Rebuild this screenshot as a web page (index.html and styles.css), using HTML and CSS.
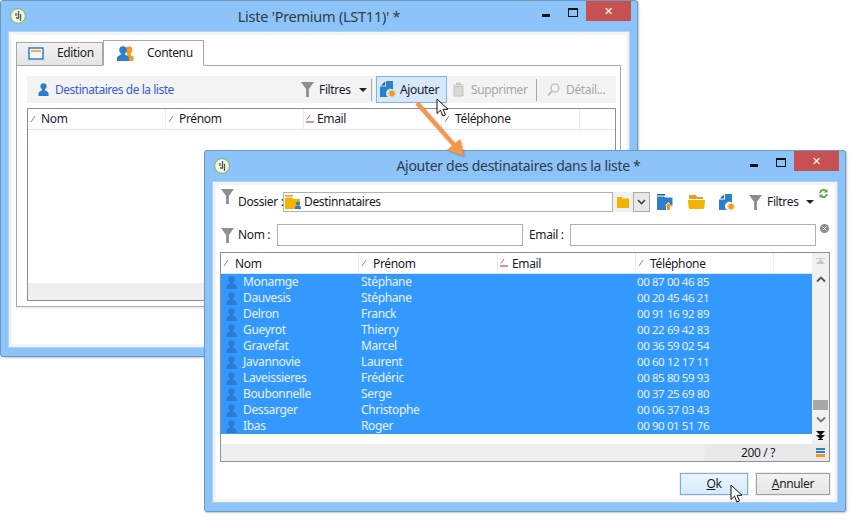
FILE: index.html
```html
<!DOCTYPE html>
<html lang="fr">
<head>
<meta charset="utf-8">
<title>Liste Premium</title>
<link rel="stylesheet" href="styles.css">
</head>
<body>
<svg class="defs" width="0" height="0">
  <symbol id="person" viewBox="0 0 12 16"><circle cx="6" cy="4.5" r="3.4"/><path d="M4.5 7h3l.3 2.2c2 .7 3.7 1.6 3.7 3.3V15H.5v-2.500c0-1.700 1.700-2.600 3.700-3.300z"/></symbol>
  <symbol id="funnel" viewBox="0 0 14 16"><path d="M0 0h14L8.500 7.500V16h-3V7.500z"/></symbol>
  <symbol id="sort" viewBox="0 0 8 8"><path d="M1 7 5 1" fill="none" stroke="#888" stroke-width="1"/></symbol>
  <symbol id="sortred" viewBox="0 0 8 8"><path d="M1 4.500 4 0" fill="none" stroke="#888" stroke-width="1"/><path d="M0 7h8" stroke="#d01818" stroke-width="1"/></symbol>
  <symbol id="add" viewBox="0 0 16 17"><path d="M1 4.500 5 .5v4z" fill="#1c5f9f"/><path d="M6 0h7v8.500a4.500 4.500 0 0 0-5 7.500H0V5.500h6z" fill="#2a80cf"/><circle cx="12" cy="12.500" r="2.700" fill="#f39a1e"/><path d="M12 8.500v8M8 12.500h8M9.200 9.700l5.600 5.600M14.800 9.700l-5.600 5.600" stroke="#f39a1e" stroke-width=".8"/></symbol>
  <symbol id="logo" viewBox="0 0 16 16"><circle cx="8" cy="8" r="7.300" fill="#f4f4ee" stroke="#8ab83c"/><path d="M8.500 3v7H6M6 5v3M10.500 6v7" fill="none" stroke="#555" stroke-width="1.300"/></symbol>
  <symbol id="cursor" viewBox="0 0 13 20"><path d="M1 1v14.500l3.500-3.300 2.400 5.800 2.600-1.100-2.400-5.600H12z" fill="#fff" stroke="#111"/></symbol>
</svg>

<section class="window window-back">
  <header class="titlebar">
    <svg class="logo"><use href="#logo"/></svg>
    <h1 class="title title-back">Liste 'Premium (LST11)' *</h1>
    <div class="winbtns">
      <span class="win-min"></span><span class="win-max"></span><span class="win-close">✕</span>
    </div>
  </header>
  <div class="client client-back">
    <div class="tabs">
      <div class="tab tab-edition">
        <svg class="tab-icon" viewBox="0 0 16 13" width="16" height="13"><rect x="1" y="1" width="14" height="11" fill="#f7f7f7" stroke="#2a80cf" stroke-width="1.500"/><rect x="3" y="3.200" width="10" height="1.600" fill="#f39a1e"/></svg>
        <span>Edition</span>
      </div>
      <div class="tab tab-contenu">
        <svg viewBox="0 0 17 15" width="17" height="15"><circle cx="12" cy="4" r="3.400" fill="#f39a1e"/><path d="M10 7h4l-.5 2 3 1.500V15h-6z" fill="#f39a1e"/><circle cx="6" cy="4" r="3.800" fill="#2a80cf"/><path d="M4 7h4l.5 2c2 .5 3.500 1.500 3.500 3v3H0v-3c0-1.500 1.500-2.500 3.500-3z" fill="#2a80cf"/></svg>
        <span>Contenu</span>
      </div>
    </div>
    <div class="panel">
      <div class="toolbar">
        <svg class="tb-person"><use href="#person"/></svg>
        <span class="tb-title">Destinataires de la liste</span>
        <span class="tb-item tb-filter"><svg class="ico-funnel"><use href="#funnel"/></svg>Filtres<i class="caret"></i></span>
        <i class="tb-sep"></i>
        <span class="tb-item tb-add"><svg class="ico-add"><use href="#add"/></svg>Ajouter</span>
        <span class="tb-item tb-off">
          <svg viewBox="0 0 13 15" width="13" height="15"><path d="M1 3h11M4.500 3V1h4v2M2 4.500h9V14H2z" fill="#d8d8d8" stroke="#c4c4c4"/></svg>Supprimer</span>
        <i class="tb-sep tb-sep-2"></i>
        <span class="tb-item tb-off tb-detail">
          <svg viewBox="0 0 13 14" width="13" height="14"><circle cx="8" cy="5" r="4" fill="none" stroke="#c4c4c4" stroke-width="1.500"/><path d="M5 8 1 12.500" stroke="#c4c4c4" stroke-width="2"/></svg>Détail...</span>
      </div>
      <div class="grid grid-back">
        <div class="thead thead-back">
          <div class="th"><svg class="s"><use href="#sort"/></svg>Nom</div>
          <div class="th"><svg class="s"><use href="#sort"/></svg>Prénom</div>
          <div class="th"><svg class="s"><use href="#sortred"/></svg>Email</div>
          <div class="th"><svg class="s"><use href="#sort"/></svg>Téléphone</div>
          <div class="th"></div>
        </div>
        <div class="grid-empty"></div>
        <div class="grid-foot"></div>
      </div>
    </div>
  </div>
</section>

<section class="window window-front">
  <header class="titlebar">
    <svg class="logo"><use href="#logo"/></svg>
    <h1 class="title title-front">Ajouter des destinataires dans la liste *</h1>
    <div class="winbtns">
      <span class="win-min"></span><span class="win-max"></span><span class="win-close">✕</span>
    </div>
  </header>
  <div class="client client-front">
    <div class="row-folder">
      <svg class="ico-funnel top"><use href="#funnel"/></svg>
      <label class="lab">Dossier :</label>
      <div class="folder-input">
        <svg viewBox="0 0 17 14" width="17" height="14"><path d="M0 0h8v1.500H0z" fill="#f39a1e"/><path d="M0 2.500h7L8.500 4H15v10H0z" fill="#f0b400"/><circle cx="13" cy="8.500" r="2" fill="#2a80cf"/><path d="M10 14v-1.500c0-1 1.500-1.700 3-1.700s3 .7 3 1.700V14z" fill="#2a80cf"/></svg>
        <span>Destinnataires</span>
      </div>
      <span class="folder-btn"><svg viewBox="0 0 12 11" width="12" height="11"><path d="M0 0h5l1 1.500h6V11H0z" fill="#f0b400"/></svg></span>
      <span class="drop-btn"><svg viewBox="0 0 9 6" width="9" height="6"><path d="M1 1l3.500 3.500L8 1" fill="none" stroke="#444" stroke-width="1.600"/></svg></span>
      <svg class="tool tool-up" viewBox="0 0 16 16" width="16" height="16"><path d="M0 0h8v1.500H0z" fill="#1f5f9e"/><path d="M0 2.500h7l1 1h7.500v8H14L11.500 8 8 11.500h1V16H0z" fill="#2a80cf"/><path d="M11.500 9l3.500 3.500H13V16h-3v-3.500H8z" fill="#f39a1e"/></svg>
      <svg class="tool tool-folder" viewBox="0 0 17 14" width="17" height="14"><path d="M1 0h7l1 2h6v2H1z" fill="#f39a1e"/><path d="M0 5h17l-.5 7-1 2H1.500l-1-2z" fill="#f0b400"/></svg>
      <svg class="tool tool-add"><use href="#add"/></svg>
      <svg class="ico-funnel tool-funnel"><use href="#funnel"/></svg>
      <span class="lab filt">Filtres</span>
      <i class="caret caret-front"></i>
      <svg class="refresh" viewBox="0 0 9 9" width="9" height="9"><path d="M1 4a3.500 3.500 0 0 1 6-2M8 5a3.500 3.500 0 0 1-6 2" fill="none" stroke="#4eaa3a" stroke-width="1.800"/><path d="M8.500 0v3.500H5zM.5 9V5.500H4z" fill="#4eaa3a"/></svg>
    </div>
    <div class="row-search">
      <svg class="ico-funnel"><use href="#funnel"/></svg>
      <label class="lab">Nom :</label>
      <div class="input input-nom"></div>
      <label class="lab lab-email">Email :</label>
      <div class="input input-email"></div>
      <svg class="clear" viewBox="0 0 9 9" width="9" height="9"><circle cx="4.500" cy="4.500" r="4.500" fill="#8e8e8e"/><path d="M2.700 2.700l3.600 3.600M6.300 2.700 2.700 6.300" stroke="#fff"/></svg>
    </div>
    <div class="grid grid-front">
      <div class="grid-main">
        <div class="thead thead-front">
          <div class="th"><svg class="s"><use href="#sort"/></svg>Nom</div>
          <div class="th"><svg class="s"><use href="#sort"/></svg>Prénom</div>
          <div class="th"><svg class="s"><use href="#sortred"/></svg>Email</div>
          <div class="th"><svg class="s"><use href="#sort"/></svg>Téléphone</div>
          <div class="th"></div>
        </div>
        <div class="rows">
          <div class="tr"><svg><use href="#person"/></svg><span>Monamge</span><span>Stéphane</span><span></span><span class="tel">00 87 00 46 85</span></div>
          <div class="tr"><svg><use href="#person"/></svg><span>Dauvesis</span><span>Stéphane</span><span></span><span class="tel">00 20 45 46 21</span></div>
          <div class="tr"><svg><use href="#person"/></svg><span>Delron</span><span>Franck</span><span></span><span class="tel">00 91 16 92 89</span></div>
          <div class="tr"><svg><use href="#person"/></svg><span>Gueyrot</span><span>Thierry</span><span></span><span class="tel">00 22 69 42 83</span></div>
          <div class="tr"><svg><use href="#person"/></svg><span>Gravefat</span><span>Marcel</span><span></span><span class="tel">00 36 59 02 54</span></div>
          <div class="tr"><svg><use href="#person"/></svg><span>Javannovie</span><span>Laurent</span><span></span><span class="tel">00 60 12 17 11</span></div>
          <div class="tr"><svg><use href="#person"/></svg><span>Laveissieres</span><span>Frédéric</span><span></span><span class="tel">00 85 80 59 93</span></div>
          <div class="tr"><svg><use href="#person"/></svg><span>Boubonnelle</span><span>Serge</span><span></span><span class="tel">00 37 25 69 80</span></div>
          <div class="tr"><svg><use href="#person"/></svg><span>Dessarger</span><span>Christophe</span><span></span><span class="tel">00 06 37 03 43</span></div>
          <div class="tr"><svg><use href="#person"/></svg><span>Ibas</span><span>Roger</span><span></span><span class="tel">00 90 01 51 76</span></div>
        </div>
      </div>
      <div class="scroll">
        <svg viewBox="0 0 9 8" width="9" height="8"><path d="M0 1h9v1H0zM4.500 2 9 7H0z" fill="#c8c8c8"/></svg>
        <svg class="sc-up" viewBox="0 0 10 7" width="10" height="7"><path d="M1 5.500 5 1.500l4 4" fill="none" stroke="#555" stroke-width="1.800"/></svg>
        <span class="sc-spacer"></span>
        <i class="sc-thumb"></i>
        <svg class="sc-down" viewBox="0 0 10 7" width="10" height="7"><path d="M1 1.500l4 4 4-4" fill="none" stroke="#777" stroke-width="1.800"/></svg>
        <svg class="sc-end" viewBox="0 0 9 9" width="9" height="9"><path d="M0 0h9L4.500 4.500zM0 4h9L4.500 8.500zM2 8h5v1H2z" fill="#111"/></svg>
      </div>
      <div class="count-bar">
        <span class="count">200 / ?</span>
        <span class="menu"><i></i><i></i><i></i></span>
      </div>
    </div>
    <div class="actions">
      <button class="btn btn-ok" type="button"><u>O</u>k</button>
      <button class="btn" type="button"><u>A</u>nnuler</button>
    </div>
  </div>
</section>

<svg class="arrow" viewBox="0 0 60 60" width="60" height="60"><path d="M2 1 L40 44" stroke="#f79646" stroke-width="4" fill="none"/><path d="M49 54 L32 48 L45 37z" fill="#f79646"/></svg>
<svg class="cursor cursor-1"><use href="#cursor"/></svg>
<svg class="cursor cursor-2"><use href="#cursor"/></svg>
</body>
</html>
```

FILE: styles.css
```css
* { box-sizing: border-box; }
html, body { margin: 0; height: 100%; }
body {
  position: relative;
  width: 861px;
  height: 528px;
  overflow: hidden;
  background: #fff;
  font: 12px/16px "Noto Sans", "Open Sans", sans-serif;
  letter-spacing: -.35px;
  color: #1a1a2a;
}
.defs { position: absolute; }

/* Windows on a desktop */
.window {
  position: absolute;
  display: flex;
  flex-direction: column;
  background: #8cc4f9;
  border: 1px solid #6f97c0;
  border-radius: 3px;
  box-shadow: 1px 1px 2px rgba(90, 90, 90, .35);
  padding: 0 7px 8px;
}
.window-back { left: 0; top: 0; width: 638px; height: 357px; }
.window-front { left: 204px; top: 150px; width: 642px; height: 362px; }

.titlebar { display: flex; align-items: flex-start; height: 30px; flex: none; position: relative; }
.logo { width: 16px; height: 16px; margin: 7px 0 0 2px; }
.title {
  flex: 1;
  margin: 4px 0 0;
  font-size: 14.500px;
  line-height: 22px;
  font-weight: 400;
  letter-spacing: -.25px;
  color: #333a45;
  text-align: center;
}
.title-back { padding-right: 18px; }
.title-front { font-size: 14px; letter-spacing: -.3px; padding-right: 31px; }
.winbtns { display: flex; align-items: flex-start; position: absolute; right: -1px; top: 0; }
.win-min { width: 8px; height: 3px; background: #111; margin: 13px 18px 0 0; }
.win-max { width: 10px; height: 9px; border: 1px solid #111; border-top-width: 2px; margin: 7px 8px 0 0; }
.win-close {
  width: 45px;
  height: 20px;
  background: #c75050;
  color: #fff;
  text-align: center;
  font: 700 11px/21px "DejaVu Sans", sans-serif;
}

.client { flex: 1; background: #fff; border: 1px solid #a9d2f8; box-shadow: inset 0 0 0 3px #f4f4f4; min-height: 0; display: flex; flex-direction: column; }

/* Back window */
.client-back { padding: 7px 8px 0 7px; }
.tabs { display: flex; align-items: flex-end; height: 26px; flex: none; position: relative; z-index: 1; }
.tab { display: flex; align-items: center; color: #1a1a2a; }
.tab-edition {
  width: 87px; height: 23px;
  padding: 0 0 2px 11px; gap: 13px;
  background: linear-gradient(#f2f2f2, #e4e4e4);
  border: 1px solid #a8a8a8; border-bottom: 0;
}
.tab-contenu {
  width: 101px; height: 26px;
  padding-left: 13px; gap: 13px;
  background: #fff;
  border: 1px solid #a8a8a8; border-bottom: 1px solid #fff;
  margin-bottom: -1px;
}
.panel { height: 242px; border: 1px solid #a8a8a8; padding: 10px 4px 0 10px; box-shadow: 0 2px 0 #f0f0f0; }
.toolbar { display: flex; align-items: center; height: 27px; background: #f3f3f3; padding-left: 11px; margin-bottom: 5px; }
.tb-person { width: 11px; height: 15px; fill: #2a80cf; flex: none; }
.tb-title { color: #3a5fcd; margin: 0 auto 0 6px; letter-spacing: -.47px; }
.tb-item { display: flex; align-items: center; height: 27px; flex: none; }
.tb-filter { gap: 5px; width: 71px; padding-left: 1px; }
.ico-funnel { width: 13px; height: 15px; fill: #8e8e8e; flex: none; }
.caret { width: 0; height: 0; border: 4px solid transparent; border-top: 4px solid #222; border-bottom: 0; margin-left: 3px; }
.tb-sep { width: 1px; height: 22px; background: #a6a6a6; margin-right: 4px; flex: none; }
.tb-sep-2 { margin-right: 0; }
.tb-add { width: 71px; gap: 4px; padding-left: 3px; background: #d5e7f8; border: 1px solid #7eb4ea; }
.ico-add { width: 16px; height: 17px; }
.tb-off { color: #a6a6a6; gap: 6px; padding-left: 5px; width: 89px; }
.tb-detail { width: 79px; padding-left: 10px; }

.grid { border: 1px solid #8d909a; background: #fff; }
.grid-back { height: 193px; display: flex; flex-direction: column; }
.thead { display: grid; height: 21px; flex: none; border-bottom: 1px solid #dbe8f8; }
.thead-back { grid-template-columns: 138px 138px 138px 138px 1fr; }
.thead-back .th { padding-left: 13px; }
.thead-front { grid-template-columns: 138px 139px 138px 138px 1fr; }
.thead-front .th { padding-top: 1px; }
.th { display: flex; align-items: center; padding-left: 14px; border-right: 1px solid #e3eefb; position: relative; color: #1a1a2a; }
.th:last-child { border-right: 0; }
.s { position: absolute; left: 2px; top: 6px; width: 8px; height: 8px; }
.grid-empty { flex: 1; }
.grid-foot { height: 17px; background: #efefef; flex: none; }

/* Front window */
.client-front { padding: 0 7px; }
.row-folder { display: flex; align-items: center; height: 20px; margin: 10px 0 0 1px; position: relative; }
.top { align-self: flex-start; margin-top: -3px; }
.lab { white-space: nowrap; }
.row-folder .lab:first-of-type { margin-left: 4px; width: 45px; }
.folder-input {
  display: flex; align-items: center; gap: 2px;
  width: 330px; height: 20px;
  border: 1px solid #b0b0b0;
  padding-left: 1px;
}
.folder-btn { display: flex; align-items: center; justify-content: center; width: 20px; height: 20px; background: #f0f0f0; }
.drop-btn { display: flex; align-items: center; justify-content: center; width: 17px; height: 20px; border: 1px solid #aaa; background: #e8e8e8; }
.tool-up { margin-left: 7px; }
.tool-folder { margin-left: 15px; }
.tool-add { width: 16px; height: 17px; margin-left: 14px; }
.tool-funnel { margin-left: 14px; }
.filt { margin-left: 5px; }
.caret-front { margin-left: 7px; }
.refresh { position: absolute; top: -3px; right: 2px; }
.row-search { display: flex; align-items: center; height: 22px; margin: 12px 0 0 1px; }
.row-search .lab:first-of-type { margin-left: 4px; width: 39px; }
.input { height: 22px; border: 1px solid #b0b0b0; background: #fff; }
.input-nom { width: 246px; }
.lab-email { margin-left: 6px; width: 41px; }
.input-email { width: 246px; }
.clear { margin: -14px 0 0 4px; }

.grid-front {
  margin-top: 6px;
  height: 210px;
  display: grid;
  grid-template-columns: 1fr 17px;
  grid-template-rows: 1fr 17px;
}
.grid-main { display: flex; flex-direction: column; min-width: 0; background: #fff; }
.rows { display: flex; flex-direction: column; }
.tr {
  display: grid;
  grid-template-columns: 22px 118px 138px 138px 1fr;
  align-items: center;
  height: 16px;
  background: #3399ff;
  color: #e6f2ff;
  white-space: nowrap;
}
.tr svg { width: 11px; height: 15px; fill: #2a7dcc; margin-left: 5px; }
.tel { font-size: 11.500px; letter-spacing: -.4px; }
.scroll {
  grid-row: 1;
  grid-column: 2;
  display: flex;
  flex-direction: column;
  align-items: center;
  background: #f1f1f1;
  padding-top: 4px;
}
.sc-up { margin-top: 11px; }
.sc-spacer { flex: 1; }
.sc-thumb { width: 15px; height: 10px; background: #a8a8a8; margin-bottom: 6px; }
.sc-down { margin-bottom: 8px; }
.sc-end { margin-bottom: 4px; }
.count-bar {
  grid-column: 1 / -1;
  display: flex;
  align-items: center;
  background: linear-gradient(90deg, #efefef 0, #efefef 483px, #e9e9e9 484px);
}
.count { margin-left: auto; margin-right: 41px; }
.menu { display: flex; flex-direction: column; gap: 1px; width: 9px; margin-right: 4px; }
.menu i { height: 2px; background: #2a80cf; }
.menu i:last-child { background: #f39a1e; height: 3px; }

.actions { display: flex; justify-content: flex-end; gap: 8px; margin-top: 11px; }
.btn {
  width: 68px;
  height: 22px;
  padding: 0;
  font: 12px/16px "Noto Sans", "Open Sans", sans-serif;
  letter-spacing: -.35px;
  color: #1a1a2a;
  background: linear-gradient(#f2f2f2, #e5e5e5);
  border: 1px solid #a0a0a0;
  box-shadow: 0 0 0 1px #eee;
}
.btn + .btn { width: 74px; }
.btn-ok { background: linear-gradient(#eaf5fe, #d6eafc); border-color: #78aee5; }

/* Overlays */
.arrow { position: absolute; left: 415px; top: 102px; filter: drop-shadow(1px 1px 1px rgba(80, 80, 80, .5)); }
.cursor { position: absolute; width: 13px; height: 20px; }
.cursor-1 { left: 436px; top: 98px; }
.cursor-2 { left: 730px; top: 484px; }
```
